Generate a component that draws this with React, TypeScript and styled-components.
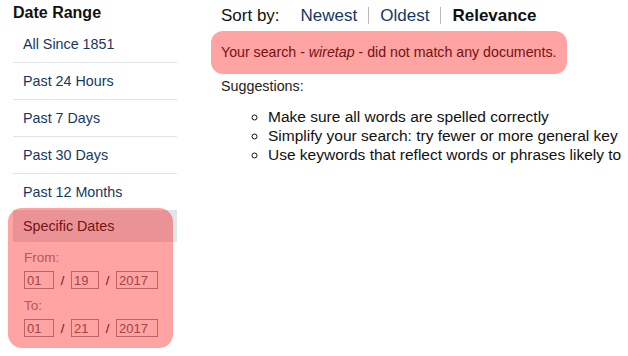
import React from "react";
import styled, { createGlobalStyle } from "styled-components";

const Global = createGlobalStyle`
  html, body { margin: 0; padding: 0; background: #fff; }
  body { font-family: "Liberation Sans", Arial, sans-serif; color: #222; }
`;

const Page = styled.div`
  display: flex;
  align-items: flex-start;
  width: 628px;
  height: 356px;
  overflow: hidden;
`;

const Sidebar = styled.aside`
  width: 164px;
  margin-left: 13px;
  flex: none;
`;

const SideTitle = styled.h3`
  margin: 0;
  height: 26px;
  line-height: 26px;
  font-size: 16px;
  font-weight: bold;
  color: #111;
`;

const RangeList = styled.ul`
  list-style: none;
  margin: 0;
  padding: 0;
`;

const RangeItem = styled.li`
  height: 36px;
  line-height: 36px;
  padding-left: 10px;
  font-size: 14.3px;
  color: #163763;
  border-bottom: 1px solid #e4e4e4;
`;

const Highlight = styled.div<{ $l: number; $r: number; $t: number; $b: number; $radius: number }>`
  position: relative;
  &::after {
    content: "";
    position: absolute;
    left: ${(p) => p.$l}px;
    right: ${(p) => p.$r}px;
    top: ${(p) => p.$t}px;
    bottom: ${(p) => p.$b}px;
    border-radius: ${(p) => p.$radius}px;
    background: rgba(255, 0, 0, 0.36);
    pointer-events: none;
  }
`;

const MessageHighlight = styled(Highlight)`
  width: 356px;
  margin-left: -10px;
`;

const SpecificHead = styled.div`
  height: 31px;
  line-height: 31px;
  padding-left: 10px;
  font-size: 14.3px;
  color: #222;
  background: #dde7ec;
`;

const DateBlock = styled.div`
  padding: 6px 0 6px 11px;
`;

const DateLabel = styled.div`
  font-size: 13.5px;
  color: #8a8a8a;
  height: 20px;
  line-height: 20px;
`;

const DateRow = styled.div`
  display: flex;
  align-items: center;
  height: 18px;
  margin: 3px 0 7px;
  &:last-child {
    margin-bottom: 0;
  }
`;

const DateInput = styled.input<{ $w: number }>`
  box-sizing: border-box;
  width: ${(p) => p.$w}px;
  height: 18px;
  border: 1px solid #9a9a9a;
  padding: 0 0 0 2px;
  margin: 0;
  font-family: "Liberation Sans", Arial, sans-serif;
  font-size: 13px;
  color: #6c6c6c;
  background: #fff;
  outline: none;
`;

const Slash = styled.span`
  width: 17px;
  text-align: center;
  font-size: 13px;
  color: #222;
`;

const Main = styled.main`
  margin-left: 44px;
  flex: 1;
`;

const SortBar = styled.div`
  display: flex;
  align-items: center;
  height: 31px;
  font-size: 17px;
`;

const SortLabel = styled.span`
  color: #111;
  margin-right: 10px;
`;

const SortLink = styled.span<{ $current?: boolean; $first?: boolean }>`
  padding: 0 11px;
  color: ${(p) => (p.$current ? "#111" : "#163763")};
  font-weight: ${(p) => (p.$current ? "bold" : "normal")};
  border-left: ${(p) => (p.$first ? "none" : "1px solid #bbb")};
  line-height: 17px;
`;

const Message = styled.div`
  height: 43px;
  box-sizing: border-box;
  padding-left: 10px;
  line-height: 43px;
  font-size: 14.2px;
  color: #222;
`;

const Suggestions = styled.div`
  font-size: 14.3px;
  color: #222;
  margin-top: 4px;
`;

const SuggestList = styled.ul`
  list-style: circle;
  margin: 13px 0 0;
  padding-left: 47px;
  font-size: 15.5px;
  line-height: 19px;
  color: #111;
  white-space: nowrap;
`;

export default function App() {
  return (
    <>
      <Global />
      <Page>
        <Sidebar>
          <SideTitle>Date Range</SideTitle>
          <RangeList>
            <RangeItem>All Since 1851</RangeItem>
            <RangeItem>Past 24 Hours</RangeItem>
            <RangeItem>Past 7 Days</RangeItem>
            <RangeItem>Past 30 Days</RangeItem>
            <RangeItem>Past 12 Months</RangeItem>
          </RangeList>
          <Highlight $l={-5} $r={4} $t={-3} $b={-5} $radius={14}>
            <SpecificHead>Specific Dates</SpecificHead>
            <DateBlock>
              <DateLabel>From:</DateLabel>
              <DateRow>
                <DateInput $w={30} readOnly value="01" />
                <Slash>/</Slash>
                <DateInput $w={28} readOnly value="19" />
                <Slash>/</Slash>
                <DateInput $w={42} readOnly value="2017" />
              </DateRow>
              <DateLabel>To:</DateLabel>
              <DateRow>
                <DateInput $w={30} readOnly value="01" />
                <Slash>/</Slash>
                <DateInput $w={28} readOnly value="21" />
                <Slash>/</Slash>
                <DateInput $w={42} readOnly value="2017" />
              </DateRow>
            </DateBlock>
          </Highlight>
        </Sidebar>
        <Main>
          <SortBar>
            <SortLabel>Sort by:</SortLabel>
            <SortLink $first>Newest</SortLink>
            <SortLink>Oldest</SortLink>
            <SortLink $current>Relevance</SortLink>
          </SortBar>
          <MessageHighlight $l={0} $r={0} $t={0} $b={0} $radius={12}>
            <Message>
              Your search - <i>wiretap</i> - did not match any documents.
            </Message>
          </MessageHighlight>
          <Suggestions>Suggestions:</Suggestions>
          <SuggestList>
            <li>Make sure all words are spelled correctly</li>
            <li>Simplify your search: try fewer or more general key</li>
            <li>Use keywords that reflect words or phrases likely to</li>
          </SuggestList>
        </Main>
      </Page>
    </>
  );
}
